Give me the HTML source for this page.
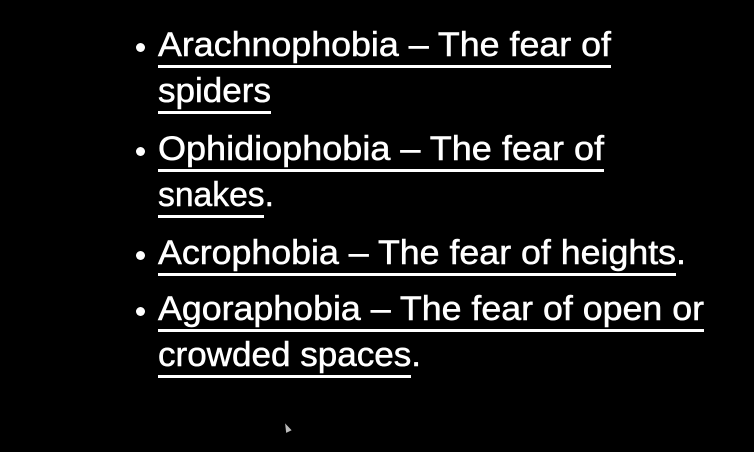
<!DOCTYPE html>
<html><head><meta charset="utf-8"><style>
html,body{margin:0;padding:0;background:#000;width:754px;height:452px;overflow:hidden;position:relative}
.l{position:absolute;left:158px;font-family:"Liberation Sans",sans-serif;font-size:34px;line-height:33px;color:#fff;white-space:nowrap;transform-origin:0 0;-webkit-text-stroke:0.5px #fff}
.u{position:absolute;left:158px;height:3px;background:#fff}
.b{position:absolute;left:136px;width:9px;height:9px;border-radius:50%;background:#fff}
.c{position:absolute;left:284px;top:423px;width:0;height:0;border-left:3px solid transparent;border-right:3px solid transparent;border-bottom:9px solid #bbb;transform:rotate(-25deg)}
</style></head><body>
<div class="b" style="top:43px"></div>
<div class="b" style="top:147px"></div>
<div class="b" style="top:251px"></div>
<div class="b" style="top:307px"></div>

<div class="l" data-w="453" style="top:29px">Arachnophobia – The fear of</div>
<div class="u" style="top:65px;width:453px"></div>
<div class="l" data-w="113" style="top:75px">spiders</div>
<div class="u" style="top:111px;width:113px"></div>

<div class="l" data-w="446" style="top:133px">Ophidiophobia – The fear of</div>
<div class="u" style="top:169px;width:446px"></div>
<div class="l" data-w="116" style="top:179px">snakes.</div>
<div class="u" style="top:215px;width:106px"></div>

<div class="l" data-w="528" style="top:237px">Acrophobia – The fear of heights.</div>
<div class="u" style="top:273px;width:518px"></div>

<div class="l" data-w="546" style="top:293px">Agoraphobia – The fear of open or</div>
<div class="u" style="top:329px;width:546px"></div>
<div class="l" data-w="263" style="top:339px">crowded spaces.</div>
<div class="u" style="top:375px;width:253px"></div>

<div class="c"></div>
<script>
document.querySelectorAll('.l').forEach(function(e){var w=e.getBoundingClientRect().width;var t=+e.getAttribute('data-w');if(w>0)e.style.transform='scaleX('+(t/w)+')';});
</script>
</body></html>
